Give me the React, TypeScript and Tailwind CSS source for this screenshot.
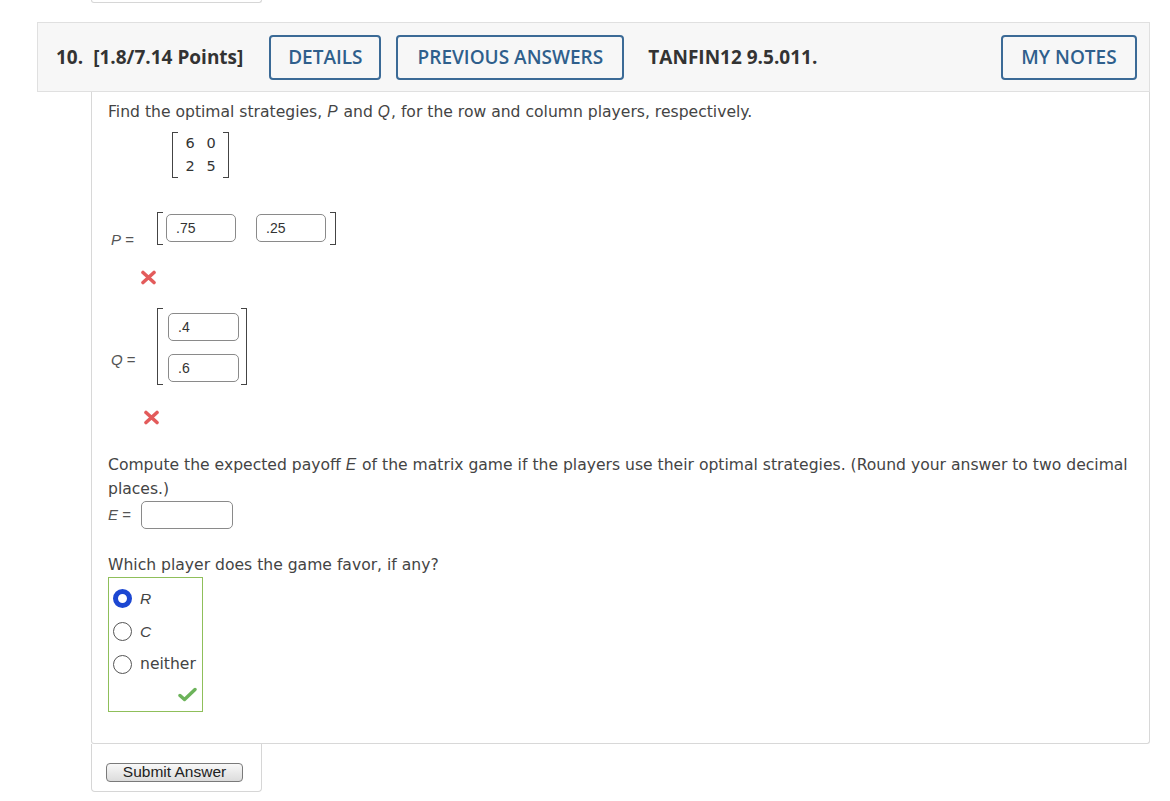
import React from "react";

const WrongMark = () => (
  <svg className="block" width="17" height="15" viewBox="0 0 17 15">
    <path d="M3 2.5 L14 12.5 M14 2.5 L3 12.5" stroke="#e35b5b" strokeWidth="3.6" strokeLinecap="round" />
  </svg>
);

const CheckMark = () => (
  <svg className="block" width="19" height="15" viewBox="0 0 19 15">
    <path d="M2 8.5 L6.5 12.5 L17 2.5" stroke="#6cb35a" strokeWidth="3.4" fill="none" strokeLinecap="round" strokeLinejoin="round" />
  </svg>
);

const LeftBracket = ({ h }: { h: string }) => (
  <div className={`w-[6px] ${h} border-l border-y border-[#444]`} />
);
const RightBracket = ({ h }: { h: string }) => (
  <div className={`w-[6px] ${h} border-r border-y border-[#444]`} />
);

const Box = ({ value, w }: { value: string; w: string }) => (
  <div className={`${w} h-[28px] border border-[#8a8a8a] rounded-[5px] pl-[9px] font-['Liberation_Sans'] text-[14px] leading-[26px] text-[#333] bg-white`}>
    {value}
  </div>
);

const Radio = ({ checked, label, italic }: { checked?: boolean; label: string; italic?: boolean }) => (
  <div className="flex items-center h-[33px]">
    {checked ? (
      <div className="w-[19px] h-[19px] rounded-full border-[5px] border-[#1c47d2] bg-white" />
    ) : (
      <div className="w-[19px] h-[19px] rounded-full border-[1.5px] border-[#555] bg-white" />
    )}
    <span
      className={`ml-[8px] text-[#444] ${
        italic ? "italic text-[15.5px] font-['Liberation_Sans']" : "text-[15.6px] font-['DejaVu_Sans']"
      }`}
    >
      {label}
    </span>
  </div>
);

export default function App() {
  return (
    <div className="w-[1170px] min-h-[801px] bg-white font-['DejaVu_Sans',sans-serif] text-[#444]">
      {/* previous question's submit box */}
      <div className="ml-[91px] w-[171px] h-[3px] border border-t-0 border-[#d6d6d6] rounded-b-[3px]" />

      {/* header */}
      <div className="ml-[37px] mt-[19px] w-[1113px] h-[70px] bg-[#f7f7f7] border border-[#e0e0e0] flex items-center pl-[18px] pr-[12px] font-['Open_Sans',sans-serif] text-[#333]">
        <span className="text-[19px] font-bold">10.</span>
        <span className="ml-[10px] text-[19px] font-bold">[1.8/7.14 Points]</span>
        <button className="ml-[26px] w-[112px] h-[45px] border-2 border-[#3b6a96] rounded-[4px] text-[19px] font-semibold text-[#2f5f8c]">
          DETAILS
        </button>
        <button className="ml-[15px] w-[228px] h-[45px] border-2 border-[#3b6a96] rounded-[4px] text-[19px] font-semibold text-[#2f5f8c]">
          PREVIOUS ANSWERS
        </button>
        <span className="ml-[24px] text-[19px] font-bold">TANFIN12 9.5.011.</span>
        <button className="ml-auto w-[136px] h-[45px] border-2 border-[#3b6a96] rounded-[4px] text-[19px] font-semibold text-[#2f5f8c]">
          MY NOTES
        </button>
      </div>

      {/* question body */}
      <div className="ml-[91px] w-[1059px] h-[652px] border border-t-0 border-[#d8d8d8] rounded-b-[3px] pl-[16px] pr-[16px] pt-[8px]">
        <p className="text-[15.6px] leading-[24px]">
          Find the optimal strategies, <i className="font-['Liberation_Sans'] pr-[1px]">P</i> and{" "}
          <i className="font-['Liberation_Sans'] pr-[1px]">Q</i>, for the row and column players, respectively.
        </p>

        {/* game matrix */}
        <div className="ml-[64px] mt-[8px] flex">
          <LeftBracket h="h-[46px]" />
          <div className="grid grid-cols-2 gap-x-[7px] pl-[5px] pr-[5px] text-[14.5px] leading-[23px] text-[#333]">
            <span className="w-[14px] text-center">6</span>
            <span className="w-[14px] text-center">0</span>
            <span className="w-[14px] text-center">2</span>
            <span className="w-[14px] text-center">5</span>
          </div>
          <RightBracket h="h-[46px]" />
        </div>

        {/* P */}
        <div className="mt-[34px] flex">
          <div className="ml-[3px] w-[46px] h-[33px] pt-[19px] font-['Liberation_Sans'] text-[15px] leading-[18px] text-[#555]">
            <i>P</i> =
          </div>
          <LeftBracket h="h-[33px]" />
          <div className="flex gap-[20px] pt-[2px] ml-[3px]">
            <Box value=".75" w="w-[70px]" />
            <Box value=".25" w="w-[70px]" />
          </div>
          <div className="ml-[4px]">
            <RightBracket h="h-[33px]" />
          </div>
        </div>
        <div className="ml-[32px] mt-[25px]">
          <WrongMark />
        </div>

        {/* Q */}
        <div className="mt-[23px] flex">
          <div className="ml-[3px] w-[46px] h-[77px] pt-[43px] font-['Liberation_Sans'] text-[15px] leading-[18px] text-[#555]">
            <i>Q</i> =
          </div>
          <LeftBracket h="h-[77px]" />
          <div className="flex flex-col gap-[13px] pt-[5px] ml-[5px]">
            <Box value=".4" w="w-[71px]" />
            <Box value=".6" w="w-[71px]" />
          </div>
          <div className="ml-[2px]">
            <RightBracket h="h-[77px]" />
          </div>
        </div>
        <div className="ml-[35px] mt-[25px]">
          <WrongMark />
        </div>

        {/* E */}
        <p className="mt-[28px] text-[15.6px] leading-[24px]">
          Compute the expected payoff <i className="font-['Liberation_Sans'] pr-[1px]">E</i> of the matrix game if
          the players use their optimal strategies. (Round your answer to two decimal places.)
        </p>
        <div className="flex items-center">
          <span className="w-[33px] font-['Liberation_Sans'] text-[15px] text-[#555]">
            <i>E</i> =
          </span>
          <Box value="" w="w-[92px]" />
        </div>

        {/* favor */}
        <p className="mt-[24px] text-[15.6px] leading-[24px]">Which player does the game favor, if any?</p>
        <div className="w-[95px] h-[135px] border border-[#8fbf5a] pl-[4px] pt-[4px] relative">
          <Radio checked label="R" italic />
          <Radio label="C" italic />
          <Radio label="neither" />
          <div className="absolute left-[69px] top-[109px]">
            <CheckMark />
          </div>
        </div>
      </div>

      {/* submit */}
      <div className="ml-[91px] w-[171px] h-[48px] border border-t-0 border-[#d6d6d6] rounded-b-[4px] pl-[14px] pt-[16px]">
        <button className="w-[137px] h-[19px] border border-[#7a7a7a] rounded-[4px] bg-gradient-to-b from-[#f8f8f8] to-[#dcdcdc] font-['Liberation_Sans'] text-[15.5px] leading-[16px] text-[#222]">
          Submit Answer
        </button>
      </div>
    </div>
  );
}
